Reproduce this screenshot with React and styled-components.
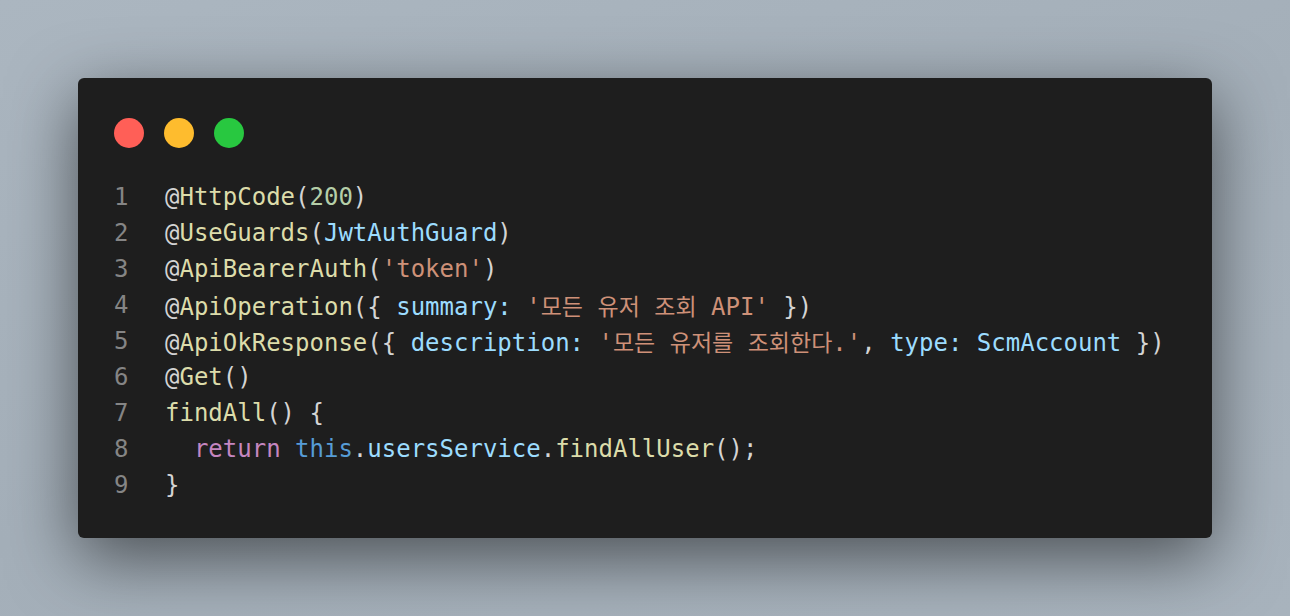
import styled, { createGlobalStyle } from 'styled-components'

const GlobalStyle = createGlobalStyle`
  html, body {
    margin: 0;
    padding: 0;
    background: #a8b3bd;
  }
`

const Page = styled.div`
  box-sizing: border-box;
  width: 1290px;
  height: 616px;
  padding: 78px;
  background: linear-gradient(160deg, #abb6c0 0%, #a4afb9 50%, #a8b3bd 100%);
`

const Window = styled.div`
  box-sizing: border-box;
  background: #1e1e1e;
  border-radius: 6px;
  padding: 40px 36px 35px 36px;
  box-shadow: 0 20px 68px rgba(0, 0, 0, 0.55);
`

const Controls = styled.div`
  display: flex;
  gap: 20px;
  margin-bottom: 31px;
`

const Dot = styled.span`
  width: 30px;
  height: 30px;
  border-radius: 50%;
  background: ${(p) => p.$color};
`

const Code = styled.div`
  font-family: "DejaVu Sans Mono", "Noto Sans CJK KR", monospace;
  font-size: 24px;
  line-height: 36px;
  color: #d4d4d4;
  white-space: pre;
`

const Line = styled.div`
  display: flex;
  height: 36px;
`

const LineNo = styled.span`
  width: 51px;
  flex-shrink: 0;
  color: #858585;
`

const Tok = styled.span`
  color: ${(p) => p.$c};
`

const Ko = styled.span`
  font-family: "Noto Sans CJK KR", sans-serif;
  font-size: 23px;
`

const C = {
  fn: '#dcdcaa',
  num: '#b5cea8',
  var: '#9cdcfe',
  str: '#ce9178',
  kw: '#c586c0',
  this: '#569cd6',
  p: '#d4d4d4',
}

const lines = [
  <>
    <Tok $c={C.p}>@</Tok><Tok $c={C.fn}>HttpCode</Tok>(<Tok $c={C.num}>200</Tok>)
  </>,
  <>
    <Tok $c={C.p}>@</Tok><Tok $c={C.fn}>UseGuards</Tok>(<Tok $c={C.var}>JwtAuthGuard</Tok>)
  </>,
  <>
    <Tok $c={C.p}>@</Tok><Tok $c={C.fn}>ApiBearerAuth</Tok>(<Tok $c={C.str}>'token'</Tok>)
  </>,
  <>
    <Tok $c={C.p}>@</Tok><Tok $c={C.fn}>ApiOperation</Tok>{'({ '}<Tok $c={C.var}>summary:</Tok>{' '}
    <Tok $c={C.str}>'<Ko>모든</Ko> <Ko>유저</Ko> <Ko>조회</Ko> API'</Tok>{' })'}
  </>,
  <>
    <Tok $c={C.p}>@</Tok><Tok $c={C.fn}>ApiOkResponse</Tok>{'({ '}<Tok $c={C.var}>description:</Tok>{' '}
    <Tok $c={C.str}>'<Ko>모든</Ko> <Ko>유저를</Ko> <Ko>조회한다</Ko>.'</Tok>,{' '}
    <Tok $c={C.var}>type:</Tok>{' '}<Tok $c={C.var}>ScmAccount</Tok>{' })'}
  </>,
  <>
    <Tok $c={C.p}>@</Tok><Tok $c={C.fn}>Get</Tok>()
  </>,
  <>
    <Tok $c={C.fn}>findAll</Tok>{'() {'}
  </>,
  <>
    {'  '}<Tok $c={C.kw}>return</Tok> <Tok $c={C.this}>this</Tok>.<Tok $c={C.var}>usersService</Tok>.
    <Tok $c={C.fn}>findAllUser</Tok>();
  </>,
  <>{'}'}</>,
]

export default function App() {
  return (
    <>
      <GlobalStyle />
      <Page>
        <Window>
          <Controls>
            <Dot $color="#ff5f57" />
            <Dot $color="#febc2e" />
            <Dot $color="#28c840" />
          </Controls>
          <Code>
            {lines.map((content, i) => (
              <Line key={i}>
                <LineNo>{i + 1}</LineNo>
                <span>{content}</span>
              </Line>
            ))}
          </Code>
        </Window>
      </Page>
    </>
  )
}
